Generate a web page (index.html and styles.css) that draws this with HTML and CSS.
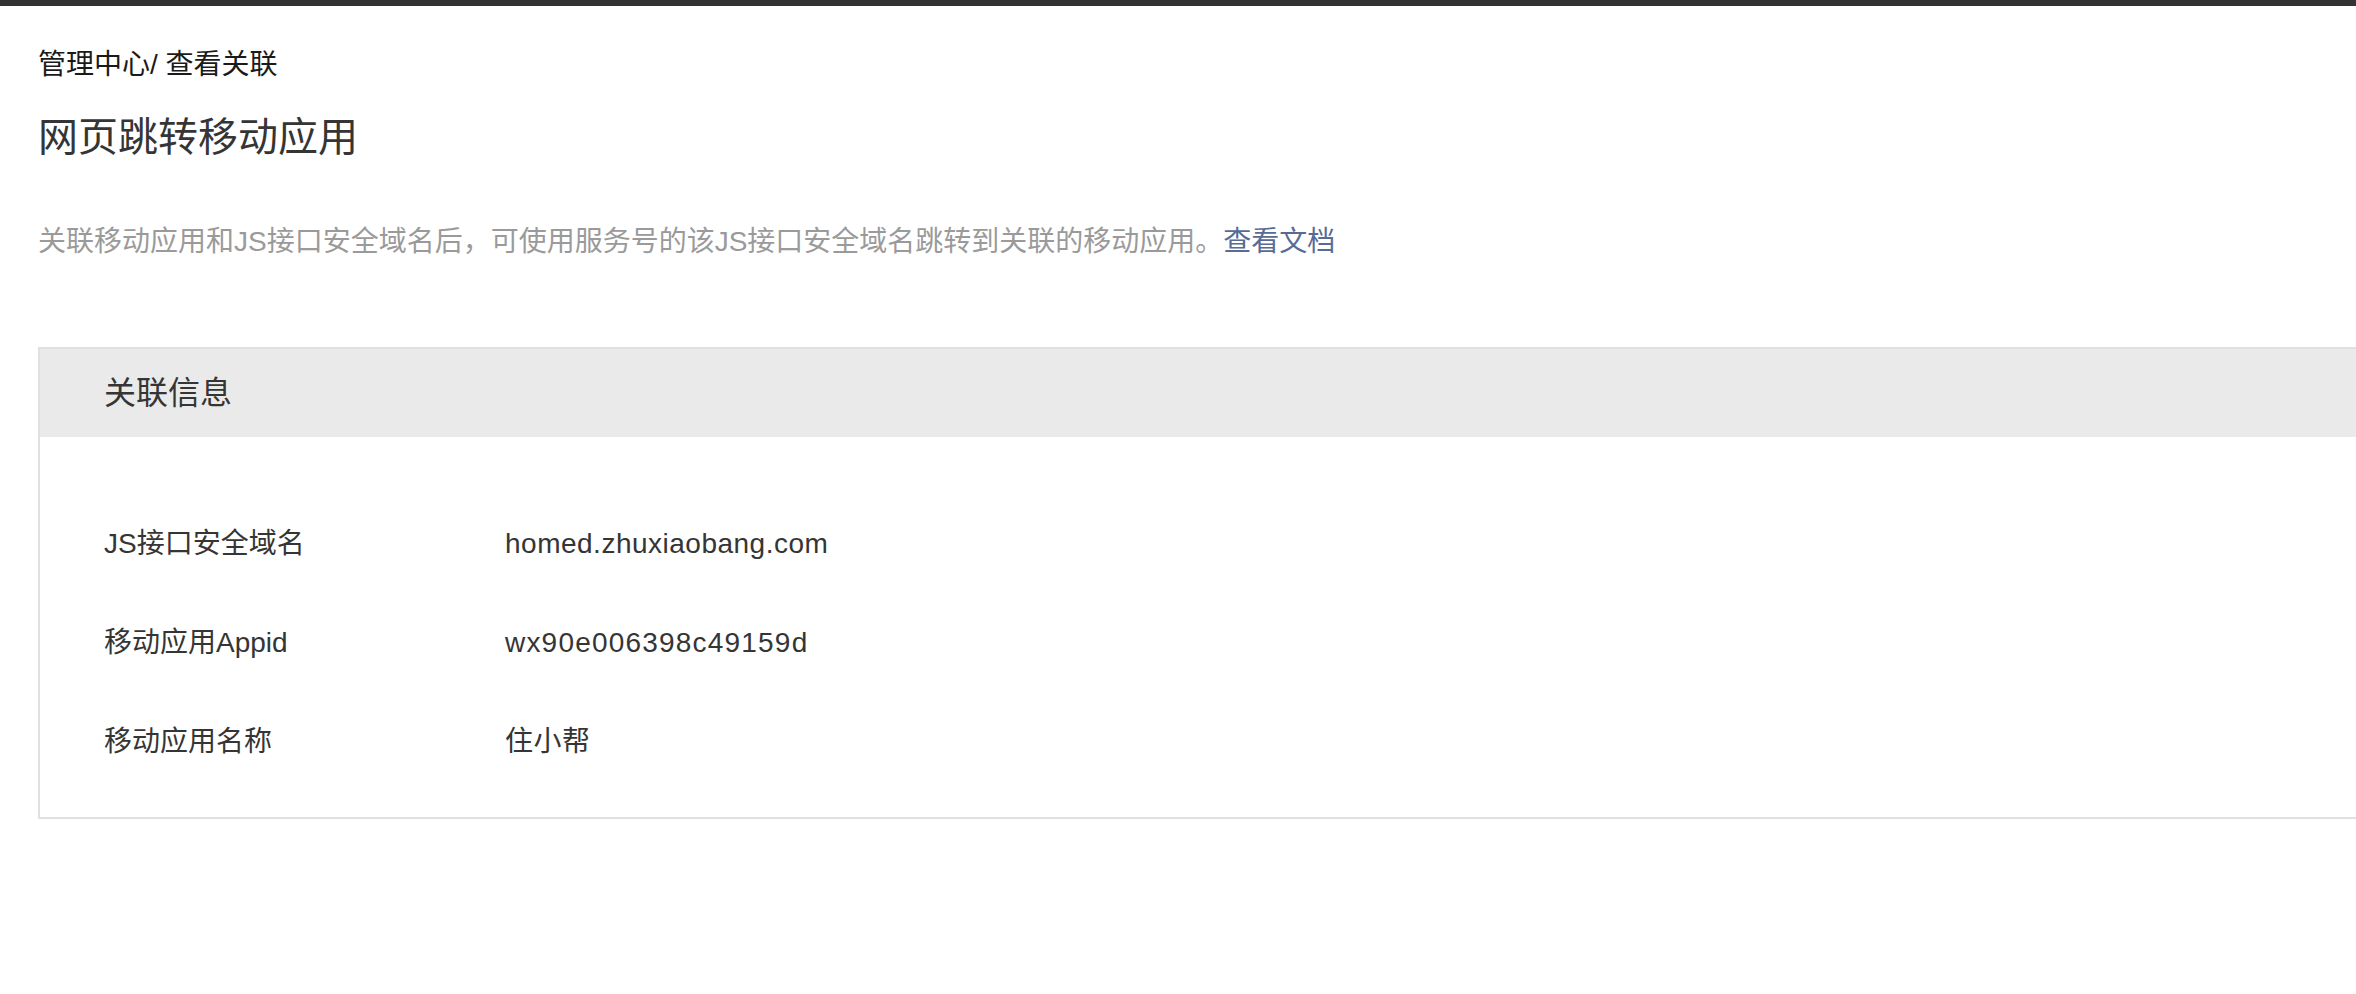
FILE: index.html
```html
<!DOCTYPE html>
<html lang="zh-CN">
<head>
<meta charset="utf-8">
<title>网页跳转移动应用</title>
<link rel="stylesheet" href="styles.css">
</head>
<body>
<div class="topbar"></div>
<main class="page">
  <div class="crumb">管理中心/ 查看关联</div>
  <h1 class="title">网页跳转移动应用</h1>
  <p class="desc">关联移动应用和JS接口安全域名后，可使用服务号的该JS接口安全域名跳转到关联的移动应用。<a class="link" href="#">查看文档</a></p>
  <section class="card">
    <div class="card-head">关联信息</div>
    <div class="card-body">
      <div class="row"><span class="label">JS接口安全域名</span><span class="value">homed.zhuxiaobang.com</span></div>
      <div class="row"><span class="label">移动应用Appid</span><span class="value value-code">wx90e006398c49159d</span></div>
      <div class="row"><span class="label">移动应用名称</span><span class="value">住小帮</span></div>
    </div>
  </section>
</main>
</body>
</html>
```
FILE: styles.css
```css
html, body {
  margin: 0;
  padding: 0;
  overflow: hidden;
  background: #fff;
}
body {
  font-family: "Liberation Sans", "Noto Sans CJK SC", sans-serif;
  color: #353535;
}
.topbar {
  height: 6px;
  background: #333333;
}
.page {
  padding: 39px 0 0 38px;
}
.crumb {
  font-size: 28px;
  line-height: 40px;
  height: 40px;
  color: #1a1a1a;
}
.title {
  margin: 24px 0 0;
  font-size: 40px;
  line-height: 56px;
  font-weight: 400;
  color: #353535;
}
.desc {
  margin: 57px 0 0;
  font-size: 28px;
  line-height: 40px;
  color: #9a9a9a;
}
.link {
  color: #576b95;
  text-decoration: none;
}
.card {
  margin-top: 85px;
  width: 2400px;
  border: 2px solid #e0e0e0;
}
.card-head {
  height: 88px;
  line-height: 88px;
  background: #eaeaea;
  padding-left: 64px;
  font-size: 32px;
  color: #353535;
}
.card-body {
  padding: 87px 0 55px 64px;
  display: flex;
  flex-direction: column;
  gap: 59px;
}
.row {
  display: grid;
  grid-template-columns: 401px 1fr;
  font-size: 28px;
  line-height: 40px;
  color: #353535;
}
.value {
  letter-spacing: 0.5px;
}
.value-code {
  letter-spacing: 1.2px;
}
```
